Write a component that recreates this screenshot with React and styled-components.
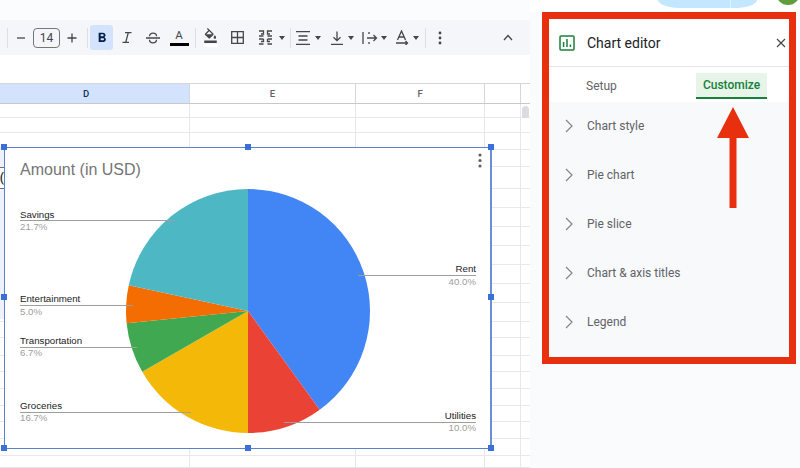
import React from 'react';
import styled, { createGlobalStyle } from 'styled-components';
import { MdFormatBold, MdFormatColorFill } from 'react-icons/md';

const GlobalStyle = createGlobalStyle`
  html, body {
    margin: 0;
    padding: 0;
    background: #fff;
    font-family: Roboto, "Liberation Sans", sans-serif;
  }
`;

const Page = styled.div`
  display: flex;
  width: 800px;
  height: 468px;
  overflow: hidden;
`;

const SheetArea = styled.div`
  position: relative;
  width: 530px;
  flex-shrink: 0;
  padding-top: 20px;
  box-sizing: border-box;
  background: linear-gradient(#fbfcfe 0, #fbfcfe 20px, #fff 20px);
`;

const Toolbar = styled.div`
  display: flex;
  align-items: center;
  height: 35px;
  padding-left: 7px;
  background: #f4f6fa;
  color: #444746;
`;

const Sep = styled.span`
  width: 1px;
  height: 20px;
  background: #dcdfe3;
  margin-left: ${p => p.$ml || 0}px;
  margin-right: ${p => p.$mr || 0}px;
`;

const Btn = styled.span`
  display: flex;
  align-items: center;
  justify-content: center;
  width: ${p => p.$w}px;
  height: 25px;
  margin-left: ${p => p.$ml || 0}px;
  font-size: ${p => p.$size || 18}px;
  border-radius: 3px;
  background: ${p => (p.$active ? '#d3e3fd' : 'transparent')};
  color: ${p => (p.$active ? '#041e49' : 'inherit')};
`;

const SizeBox = styled.span`
  display: flex;
  align-items: center;
  justify-content: center;
  width: 27px;
  height: 20px;
  box-sizing: border-box;
  border: 1px solid #747775;
  border-radius: 4px;
  font-size: 12px;
  color: #444746;
`;

const Caret = styled.span`
  width: 0;
  height: 0;
  border-left: 3.5px solid transparent;
  border-right: 3.5px solid transparent;
  border-top: 4px solid #444746;
`;

const ColorA = styled.span`
  display: flex;
  flex-direction: column;
  align-items: center;
  font-size: 11.5px;
  line-height: 12px;
  color: #444746;

  &::after {
    content: '';
    display: block;
    width: 19px;
    height: 3px;
    margin-top: 2px;
    background: #000;
  }
`;

const FillSwatch = styled.span`
  display: flex;
  flex-direction: column;
  align-items: center;
  font-size: 15px;
  line-height: 15px;

  &::after {
    content: '';
    display: block;
    width: 15px;
    height: 3px;
    margin-top: 1px;
    background: #fff;
  }
`;

const CollapseBtn = styled(Btn)`
  margin-left: auto;
  margin-right: 11px;
`;

const Gap = styled.div`
  height: 28px;
`;

const Row = styled.div`
  display: flex;
  height: ${p => p.$h}px;
  box-sizing: border-box;
  border-bottom: 1px solid ${p => (p.$head ? '#c7cacc' : '#e6e8ea')};
  border-top: ${p => (p.$head ? '1px solid #d4d6d8' : '0')};
`;

const Cell = styled.div`
  display: flex;
  align-items: center;
  justify-content: center;
  width: ${p => p.$w}px;
  box-sizing: border-box;
  padding-right: ${p => (p.$selected ? 17 : 0)}px;
  border-right: 1px solid ${p => (p.$head ? '#d4d6d8' : '#e6e8ea')};
  background: ${p => (p.$selected ? '#d3e3fd' : 'transparent')};
  font-size: 9.5px;
  font-weight: 500;
  color: ${p => (p.$selected ? '#0b2f5f' : '#5f6368')};
`;

const Scrollbar = styled.div`
  flex: 1;
  position: relative;
  background: #fff;
`;

const ScrollThumb = styled.span`
  position: absolute;
  top: 2px;
  left: 1px;
  width: 7px;
  height: 20px;
  border-radius: 4px;
  background: #dadce0;
`;

const EdgeCell = styled.div`
  position: absolute;
  left: 0;
  top: 147px;
  width: 4px;
  height: 172px;
  background: #eef0fb;
`;

const EdgeText = styled.div`
  position: absolute;
  left: 0;
  top: 20px;
  width: 4px;
  height: 22px;
  box-sizing: border-box;
  border-top: 1px solid #6d7175;
  border-bottom: 1px solid #6d7175;
  overflow: hidden;
  display: flex;
  align-items: center;
  justify-content: flex-end;
  font-size: 12px;
  font-weight: 700;
  color: #333;
  background: #fff;
`;

const Chart = styled.div`
  position: absolute;
  left: 4px;
  top: 147px;
  width: 488px;
  height: 302px;
  box-sizing: border-box;
  background: #fff;
  border: 1px solid #5a80c8;
  border-left-width: 1.5px;
  border-right: 2px solid #6b8fd4;
`;

const ChartSvg = styled.svg`
  position: absolute;
  left: -1.5px;
  top: -1px;
  display: block;
`;

const Handle = styled.span`
  position: absolute;
  width: 6px;
  height: 6px;
  background: #3c6fd8;
  left: ${p => p.$x - 8.5}px;
  top: ${p => p.$y - 151}px;
`;

const Side = styled.div`
  position: relative;
  flex: 1;
  background: #f9fbfd;
`;

const TopBar = styled.div`
  display: flex;
  align-items: flex-start;
  height: 12px;
  padding-left: 128px;
  overflow: hidden;
  background: #fff;
`;

const Pill = styled.div`
  display: flex;
  flex-shrink: 0;
  width: 99px;
  height: 8px;
  border-radius: 0 0 24px 24px / 0 0 8px 8px;
  background: #c2e7ff;
`;

const PillDivider = styled.span`
  width: 1px;
  margin-left: 72px;
  background: #e3f2fd;
`;

const Avatar = styled.div`
  flex-shrink: 0;
  width: 24px;
  height: 24px;
  margin-top: -19px;
  margin-left: 19px;
  border-radius: 50%;
  background: #5f9e3a;
`;

const Frame = styled.div`
  position: relative;
  width: 254px;
  height: 352px;
  margin-left: 12px;
  box-sizing: border-box;
  border: 7px solid #e8300f;
  background: #f8f9fb;
`;

const Header = styled.div`
  display: flex;
  align-items: center;
  height: 48px;
  padding-left: 10px;
  padding-right: 3px;
  box-sizing: border-box;
  background: #fff;
  border-bottom: 1px solid #e3e5e8;
`;

const Title = styled.div`
  margin-left: 12px;
  font-size: 14px;
  color: #202124;
  flex: 1;
`;

const Tabs = styled.div`
  display: flex;
  height: 35px;
  padding-left: 37px;
  align-items: stretch;
  background: #fff;
  font-size: 12px;
`;

const Tab = styled.div`
  display: flex;
  align-items: center;
  justify-content: ${p => (p.$active ? 'center' : 'flex-start')};
  width: ${p => p.$w}px;
  height: ${p => (p.$active ? '26px' : 'auto')};
  margin-top: ${p => (p.$active ? '6px' : 0)};
  padding-top: ${p => (p.$active ? 0 : 3)}px;
  box-sizing: border-box;
  font-weight: ${p => (p.$active ? 500 : 400)};
  color: ${p => (p.$active ? '#188038' : '#5f6368')};
  background: ${p => (p.$active ? '#e6f4ea' : 'transparent')};
  border-bottom: ${p => (p.$active ? '2px solid #188038' : '0')};
`;

const SectionList = styled.div`
  display: flex;
  flex-direction: column;
  margin-top: -1px;
`;

const Section = styled.div`
  display: flex;
  align-items: center;
  height: 49px;
  padding-left: 16px;
  gap: 14px;
  font-size: 12px;
  color: #5f6368;
`;

const Arrow = styled.svg`
  position: absolute;
  left: 167px;
  top: 88px;
`;

const icon = { fill: 'none', stroke: '#444746', strokeWidth: 1.3 };

function MinusIcon() {
  return (
    <svg width="10" height="10" viewBox="0 0 10 10" {...icon}>
      <path d="M1 5h8" />
    </svg>
  );
}

function PlusIcon() {
  return (
    <svg width="10" height="10" viewBox="0 0 10 10" {...icon}>
      <path d="M0.5 5h9M5 0.5v9" />
    </svg>
  );
}

function ItalicIcon() {
  return (
    <svg width="10" height="11" viewBox="0 0 10 11" {...icon}>
      <path d="M3 0.7h6.5M0.5 10.3H7M6.3 0.7L3.7 10.3" />
    </svg>
  );
}

function StrikeIcon() {
  return (
    <svg width="14" height="12" viewBox="0 0 14 12" {...icon}>
      <path d="M0 6h14M3.5 4.2a3.5 3 0 0 1 7 0M3.5 7.8a3.5 3 0 0 0 7 0" />
    </svg>
  );
}

function BordersIcon() {
  return (
    <svg width="13" height="13" viewBox="0 0 13 13" {...icon}>
      <path d="M0.7 0.7h11.6v11.6H0.7zM6.5 0.7v11.6M0.7 6.5h11.6" />
    </svg>
  );
}

function MergeIcon() {
  return (
    <svg width="15" height="15" viewBox="0 0 15 15" {...icon}>
      <path d="M1 1h4.5v3H3M1 6h4.5M14 1H9.5v3H12M14 6H9.5" />
      <path d="M1 9h4.5M5.5 14H1M5.5 9v2.5H3M14 9H9.5M9.5 14H14M9.5 9v2.5H12" />
    </svg>
  );
}

function AlignIcon() {
  return (
    <svg width="16" height="14" viewBox="0 0 16 14" {...icon}>
      <path d="M1 0.7h14M3.5 5h9M3.5 9h9M1 13.3h14" />
    </svg>
  );
}

function DownIcon() {
  return (
    <svg width="14" height="14" viewBox="0 0 14 14" {...icon}>
      <path d="M7 0.5v9M3.5 6.2L7 9.7l3.5-3.5M1 13.3h12" />
    </svg>
  );
}

function WrapIcon() {
  return (
    <svg width="16" height="14" viewBox="0 0 16 14" {...icon}>
      <path d="M1 1v12M14.5 7H5M11.5 4l3 3-3 3M7 1v2M7 11v2" />
    </svg>
  );
}

function RotateIcon() {
  return (
    <svg width="14" height="15" viewBox="0 0 14 15" {...icon}>
      <path d="M2.5 10L6.5 1l4 9M4 7h5M1 13h11M10.5 11l2 2-2 2" />
    </svg>
  );
}

function MoreIcon() {
  return (
    <svg width="4" height="14" viewBox="0 0 4 14" fill="#444746">
      <circle cx="2" cy="2" r="1.4" />
      <circle cx="2" cy="7" r="1.4" />
      <circle cx="2" cy="12" r="1.4" />
    </svg>
  );
}

function UpIcon() {
  return (
    <svg width="10" height="7" viewBox="0 0 10 7" {...icon}>
      <path d="M1 6l4-4.5L9 6" />
    </svg>
  );
}

function ChartIcon() {
  return (
    <svg width="16" height="16" viewBox="0 0 16 16" fill="none">
      <rect x="1" y="1" width="14" height="14" rx="1" stroke="#188038" strokeWidth="1.5" />
      <path d="M4.6 7v5M8 4v8M11.4 9.5V12" stroke="#188038" strokeWidth="1.5" />
    </svg>
  );
}

function CloseIcon() {
  return (
    <svg width="10" height="10" viewBox="0 0 10 10" fill="none">
      <path d="M1 1l8 8M9 1l-8 8" stroke="#444746" strokeWidth="1.2" />
    </svg>
  );
}

function Chevron() {
  return (
    <svg width="8" height="14" viewBox="0 0 8 14" fill="none">
      <path d="M1 1l6 6-6 6" stroke="#80868b" strokeWidth="1.2" />
    </svg>
  );
}

// angles start at 12 o'clock and go clockwise
const CX = 248;
const CY = 311;
const R = 122;
const slices = [
  { pct: 40, color: '#4285f4' },
  { pct: 10, color: '#ea4335' },
  { pct: 16.7, color: '#f4b908' },
  { pct: 6.7, color: '#3fa850' },
  { pct: 5, color: '#f46d03' },
  { pct: 21.6, color: '#4db8c4' }
];

function slicePath(from, to) {
  const a = (from / 100) * Math.PI * 2;
  const b = (to / 100) * Math.PI * 2;
  const large = to - from > 50 ? 1 : 0;
  const x1 = CX + R * Math.sin(a);
  const y1 = CY - R * Math.cos(a);
  const x2 = CX + R * Math.sin(b);
  const y2 = CY - R * Math.cos(b);
  return `M${CX} ${CY}L${x1} ${y1}A${R} ${R} 0 ${large} 1 ${x2} ${y2}Z`;
}

const labels = [
  { name: 'Savings', pct: '21.7%', x: 20, end: 175, line: 220, base: 218, sub: 230 },
  { name: 'Entertainment', pct: '5.0%', x: 20, end: 133, line: 305, base: 302, sub: 315 },
  { name: 'Transportation', pct: '6.7%', x: 20, end: 137, line: 347, base: 344, sub: 356 },
  { name: 'Groceries', pct: '16.7%', x: 20, end: 191, line: 412, base: 409, sub: 421 },
  { name: 'Rent', pct: '40.0%', x: 476, end: 358, line: 275, base: 272, sub: 285, right: true },
  { name: 'Utilities', pct: '10.0%', x: 476, end: 284, line: 422, base: 419, sub: 431, right: true }
];

function Pie() {
  let start = 0;
  return (
    <ChartSvg width="488" height="302" viewBox="4 147 488 302">
      <text x="20" y="175" fontFamily="Liberation Sans" fontSize="16" fill="#757575">
        Amount (in USD)
      </text>
      {slices.map(s => {
        const d = slicePath(start, start + s.pct);
        start += s.pct;
        return <path key={s.color} d={d} fill={s.color} />;
      })}
      {labels.map(l => (
        <g key={l.name} fontFamily="Liberation Sans" fontSize="9.7" textAnchor={l.right ? 'end' : 'start'}>
          <path d={`M${l.x} ${l.line + 0.5}H${l.end}`} stroke="#9e9e9e" strokeWidth="1" />
          <text x={l.x} y={l.base} fill="#222">
            {l.name}
          </text>
          <text x={l.x} y={l.sub} fill="#9e9e9e">
            {l.pct}
          </text>
        </g>
      ))}
      <circle cx="480" cy="155" r="1.6" fill="#616161" />
      <circle cx="480" cy="160.5" r="1.6" fill="#616161" />
      <circle cx="480" cy="166" r="1.6" fill="#616161" />
    </ChartSvg>
  );
}

const rowHeights = [14, 15, 17, 17, 22, 19, 19, 19, 19, 19, 19, 19, 16, 18, 16, 17, 17, 16, 17, 17, 12];
const handles = [
  [4, 147],
  [248, 147],
  [491, 147],
  [4, 297],
  [491, 297],
  [4, 448],
  [248, 448],
  [491, 448]
];
const sections = ['Chart style', 'Pie chart', 'Pie slice', 'Chart & axis titles', 'Legend'];

export default function App() {
  return (
    <Page>
      <GlobalStyle />
      <SheetArea>
        <Toolbar>
          <Sep />
          <Btn $w={25}><MinusIcon /></Btn>
          <SizeBox>14</SizeBox>
          <Btn $w={24}><PlusIcon /></Btn>
          <Sep $ml={3} $mr={2} />
          <Btn $w={23} $active $size={16}><MdFormatBold /></Btn>
          <Btn $w={27}><ItalicIcon /></Btn>
          <Btn $w={26}><StrikeIcon /></Btn>
          <Btn $w={26}><ColorA>A</ColorA></Btn>
          <Sep $ml={3} $mr={1} />
          <Btn $w={26}><FillSwatch><MdFormatColorFill /></FillSwatch></Btn>
          <Btn $w={28}><BordersIcon /></Btn>
          <Btn $w={28}><MergeIcon /></Btn>
          <Caret />
          <Sep $ml={5} />
          <Btn $w={24}><AlignIcon /></Btn>
          <Caret />
          <Btn $w={22} $ml={5}><DownIcon /></Btn>
          <Caret />
          <Btn $w={22} $ml={5}><WrapIcon /></Btn>
          <Caret />
          <Btn $w={22} $ml={4}><RotateIcon /></Btn>
          <Caret />
          <Sep $ml={6} />
          <Btn $w={28}><MoreIcon /></Btn>
          <CollapseBtn $w={22}><UpIcon /></CollapseBtn>
        </Toolbar>
        <Gap />
        <Row $h={21} $head>
          <Cell $w={190} $head $selected>D</Cell>
          <Cell $w={166} $head>E</Cell>
          <Cell $w={129} $head>F</Cell>
          <Cell $w={36} $head />
          <Scrollbar />
        </Row>
        {rowHeights.map((h, i) => (
          <Row key={i} $h={h}>
            <Cell $w={190} />
            <Cell $w={166} />
            <Cell $w={129} />
            <Cell $w={36} />
            <Scrollbar>{i === 0 && <ScrollThumb />}</Scrollbar>
          </Row>
        ))}
        <EdgeCell>
          <EdgeText>(</EdgeText>
        </EdgeCell>
        <Chart>
          <Pie />
          {handles.map(([x, y]) => (
            <Handle key={`${x}-${y}`} $x={x} $y={y} />
          ))}
        </Chart>
      </SheetArea>
      <Side>
        <TopBar>
          <Pill><PillDivider /></Pill>
          <Avatar />
        </TopBar>
        <Frame>
          <Header>
            <ChartIcon />
            <Title>Chart editor</Title>
            <CloseIcon />
          </Header>
          <Tabs>
            <Tab $w={110}>Setup</Tab>
            <Tab $w={71} $active>Customize</Tab>
          </Tabs>
          <SectionList>
            {sections.map(s => (
              <Section key={s}>
                <Chevron />
                {s}
              </Section>
            ))}
          </SectionList>
          <Arrow width="34" height="102" viewBox="0 0 34 102">
            <path d="M17 0L33 31H20.5V101H13.5V31H1Z" fill="#e8300f" />
          </Arrow>
        </Frame>
      </Side>
    </Page>
  );
}
